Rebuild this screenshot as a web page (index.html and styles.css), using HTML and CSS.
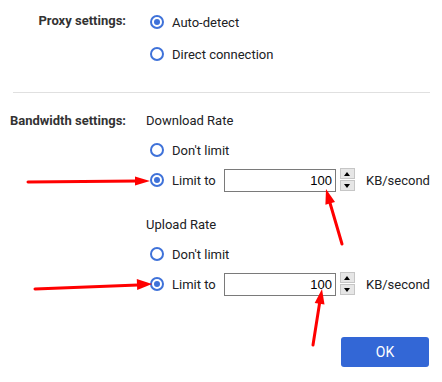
FILE: index.html
```html
<!DOCTYPE html>
<html lang="en">
<head>
  <meta charset="UTF-8" />
  <title>Settings</title>
  <link rel="stylesheet" href="styles.css">
</head>
<body>
  <div class="dialog">
    <!-- Proxy -->
    <div class="section proxy">
      <div class="label">Proxy settings:</div>
      <div class="content">
        <div class="radio checked"><span class="dot"></span>Auto-detect</div>
        <div class="radio"><span class="dot"></span>Direct connection</div>
      </div>
    </div>

    <hr class="divider">

    <!-- Bandwidth -->
    <div class="section bandwidth">
      <div class="label">Bandwidth settings:</div>
      <div class="content">
        <div class="heading">Download Rate</div>
        <div class="radio"><span class="dot"></span>Don't limit</div>
        <div class="radio checked">
          <span class="dot"></span><span class="limit-text">Limit to</span>
          <input class="rate" type="text" value="100">
          <div class="spinner">
            <span class="spin up"></span>
            <span class="spin down"></span>
          </div>
          <span class="unit">KB/second</span>
        </div>

        <div class="heading upload">Upload Rate</div>
        <div class="radio"><span class="dot"></span>Don't limit</div>
        <div class="radio checked">
          <span class="dot"></span><span class="limit-text">Limit to</span>
          <input class="rate" type="text" value="100">
          <div class="spinner">
            <span class="spin up"></span>
            <span class="spin down"></span>
          </div>
          <span class="unit">KB/second</span>
        </div>
      </div>
    </div>

    <div class="actions">
      <button class="ok">OK</button>
    </div>
  </div>

  <!-- red annotation arrows drawn over the dialog -->
  <svg class="arrows" width="442" height="382" viewBox="0 0 442 382">
    <g stroke="#f00" stroke-width="3" stroke-linecap="round" fill="none">
      <line x1="28" y1="182" x2="138" y2="181" />
      <line x1="342" y1="244" x2="330" y2="203" />
      <line x1="35" y1="289" x2="138" y2="285" />
      <line x1="313" y1="345" x2="319.6" y2="303" />
    </g>
    <g fill="#f00">
      <polygon points="150,181 135,176.5 135,185.5" />
      <polygon points="326,189 335,202 325.4,204.8" />
      <polygon points="152,284 137.2,290 136.8,279" />
      <polygon points="322,289 324.5,304.6 314.7,303" />
    </g>
  </svg>
</body>
</html>
```

FILE: styles.css
```css
body {
  margin: 0;
  background: #fff;
  color: #202124;
  font-family: Roboto, "Liberation Sans", sans-serif;
  font-size: 13px;
}

.dialog {
  width: 442px;
  height: 382px;
  position: relative;
}

.section {
  display: grid;
  grid-template-columns: 126px 1fr;
  column-gap: 20px;
  align-items: start;
}

.label {
  text-align: right;
  font-weight: bold;
  color: #333;
}

.proxy {
  padding-top: 6px;
}

.proxy .label {
  line-height: 30px;
}

.proxy .radio {
  height: 32px;
}

.bandwidth {
  padding-top: 18px;
}

.bandwidth .label {
  line-height: 20px;
}

.heading {
  line-height: 20px;
  margin-bottom: 4px;
}

.heading.upload {
  margin-top: 20px;
}

.radio {
  display: flex;
  align-items: center;
  height: 30px;
  padding-left: 4px;
}

.dot {
  box-sizing: border-box;
  width: 14px;
  height: 14px;
  border: 2px solid #3f72d9;
  border-radius: 50%;
  margin-right: 8px;
  position: relative;
  flex: none;
}

.checked .dot::after {
  content: "";
  position: absolute;
  left: 2px;
  top: 2px;
  width: 6px;
  height: 6px;
  border-radius: 50%;
  background: #3f72d9;
}

.limit-text {
  width: 52px;
}

.rate {
  box-sizing: border-box;
  width: 112px;
  height: 23px;
  border: 1px solid #7a7a7a;
  padding: 0 3px 0 0;
  margin: 0;
  text-align: right;
  font-family: "Liberation Sans", sans-serif;
  font-size: 13px;
  color: #000;
}

.spinner {
  display: flex;
  flex-direction: column;
  gap: 1px;
  margin-left: 4px;
  margin-top: -1px;
}

.spin {
  box-sizing: border-box;
  width: 15px;
  height: 11px;
  background: #e6e6e6;
  border: 1px solid #c6c6c6;
  position: relative;
}

.spin::after {
  content: "";
  position: absolute;
  left: 3px;
  top: 3px;
  border-left: 3.5px solid transparent;
  border-right: 3.5px solid transparent;
}

.spin.up::after {
  border-bottom: 4px solid #000;
}

.spin.down::after {
  border-top: 4px solid #000;
}

.unit {
  margin-left: 11px;
}

.divider {
  border: none;
  border-top: 1px solid #e0e0e0;
  margin: 22px 12px 0 13px;
}

.actions {
  display: flex;
  justify-content: flex-end;
  padding: 38px 13px 0 0;
}

.ok {
  width: 88px;
  height: 30px;
  border: none;
  border-radius: 3px;
  background: #3367d6;
  color: #fff;
  font-family: Roboto, "Liberation Sans", sans-serif;
  font-size: 14px;
}

.arrows {
  position: absolute;
  left: 0;
  top: 0;
  pointer-events: none;
}
```
